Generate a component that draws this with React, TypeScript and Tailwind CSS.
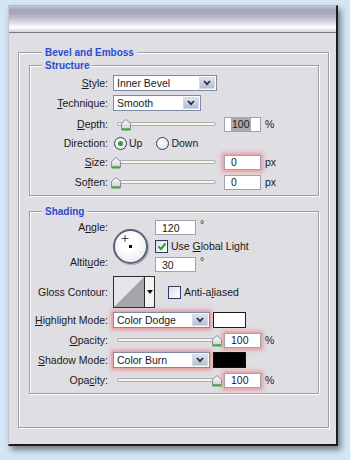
import type { ReactNode } from "react";

const TEXT = "text-[10.5px] leading-[14px] text-[#1a1a1a]";

function Legend({ children, ml }: { children: ReactNode; ml: string }) {
  return (
    <legend className={`${ml} px-[3px] bg-[#dfdee3] text-[10px] leading-[13px] font-bold text-[#2b4bd0]`}>
      {children}
    </legend>
  );
}

function Label({ children, className = "" }: { children: ReactNode; className?: string }) {
  return <div className={`w-[78px] shrink-0 text-right ${TEXT} ${className}`}>{children}</div>;
}

function Chevron() {
  return (
    <svg width="8" height="6" viewBox="0 0 8 6">
      <path d="M1 1 L4 4.2 L7 1" fill="none" stroke="#1f2b4d" strokeWidth="1.7" />
    </svg>
  );
}

function Select({ value, width, glow = false }: { value: string; width: string; glow?: boolean }) {
  return (
    <div
      className={`${width} ml-[5px] h-[16px] flex items-stretch bg-white border border-[#7d8aa6] ${
        glow ? "shadow-[0_0_4px_2px_rgba(240,96,96,0.55)]" : ""
      }`}
    >
      <div className={`flex-1 pl-[3px] ${TEXT}`}>{value}</div>
      <div className="w-[16px] m-px flex items-center justify-center border border-[#d4d9e3] bg-[linear-gradient(to_bottom,#dfe3ec,#b6bdcd)]">
        <Chevron />
      </div>
    </div>
  );
}

function Input({
  value,
  glow = false,
  selected = false,
  width = "w-[37px]",
  className = "",
}: {
  value: string;
  glow?: boolean;
  selected?: boolean;
  width?: string;
  className?: string;
}) {
  return (
    <div
      className={`${width} ${className} h-[15px] bg-white border border-[#a2a2ac] pl-[6px] flex items-center ${TEXT} ${
        glow ? "shadow-[0_0_4px_2px_rgba(240,96,96,0.55)]" : ""
      }`}
    >
      <span className={selected ? "bg-[#a9a9b6] px-px" : ""}>{value}</span>
    </div>
  );
}

function Thumb() {
  return (
    <svg width="10" height="12" viewBox="0 0 10 12">
      <defs>
        <linearGradient id="tg" x1="0" y1="0" x2="0" y2="1">
          <stop offset="0" stopColor="#ffffff" />
          <stop offset="1" stopColor="#cfd0d6" />
        </linearGradient>
      </defs>
      <path d="M0.5 4.5 L5 0.5 L9.5 4.5 V10 H0.5 Z" fill="url(#tg)" stroke="#8b8c98" />
      <rect x="0.5" y="9.5" width="9" height="2" fill="#35a93a" />
    </svg>
  );
}

function Slider({ pct }: { pct: number }) {
  return (
    <div className="relative ml-[5px] w-[106px] h-[16px] flex items-center">
      <div className="ml-[4px] w-[99px] h-[4px] rounded-full bg-[#f5f4ee] border border-[#aeada6]" />
      <div className="absolute top-[3px]" style={{ left: `${3 + pct * 101 - 5}px` }}>
        <Thumb />
      </div>
    </div>
  );
}

function Unit({ children }: { children: ReactNode }) {
  return <span className={`ml-[4px] ${TEXT}`}>{children}</span>;
}

function Radio({ checked }: { checked: boolean }) {
  return (
    <div className="w-[13px] h-[13px] rounded-full border border-[#2c3f62] bg-[radial-gradient(circle_at_40%_35%,#ffffff,#dcdce4)] flex items-center justify-center">
      {checked && <div className="w-[5px] h-[5px] rounded-full bg-[#2aa52f]" />}
    </div>
  );
}

function Checkbox({ checked }: { checked: boolean }) {
  return (
    <div className="w-[13px] h-[13px] border border-[#2c3f62] bg-[linear-gradient(135deg,#dcdce4,#ffffff)] flex items-center justify-center">
      {checked && (
        <svg width="10" height="9" viewBox="0 0 10 9">
          <path d="M1.5 4.5 L4 7 L8.5 1.5" fill="none" stroke="#21a126" strokeWidth="2" />
        </svg>
      )}
    </div>
  );
}

function Row({ children, className = "" }: { children: ReactNode; className?: string }) {
  return <div className={`flex items-center h-[16px] ${className}`}>{children}</div>;
}

export default function App() {
  return (
    <div className="w-[350px] h-[460px] overflow-hidden bg-[#d3e6f5] pl-[8px] pt-[5px] font-['Liberation_Sans',Arial,sans-serif]">
      <div className="w-[330px] h-[441px] flex flex-col bg-[#dfdee3] border-l border-t border-l-[#c4c4cc] border-t-[#b7b8c6] border-r-2 border-b-2 border-r-[#1c1c1c] border-b-[#1c1c1c] shadow-[3px_4px_6px_rgba(0,0,0,0.45)]">
        {/* title bar */}
        <div className="h-[27px] shrink-0 border-b border-[#787a8c] bg-[linear-gradient(to_bottom,#c4c5d2_0px,#a3a5b7_4px,#a8aabb_8px,#c2c3d1_13px,#e4e4ec_18px,#ffffff_21px,#f0f0f4_23px,#cfd0da_26px)]" />

        <div className="pl-[9px] pt-[13px]">
          <fieldset className="w-[311px] border border-[#9d9da7] shadow-[inset_1px_1px_0_#fff,1px_1px_0_#fff] pl-[10px] pb-[33px]">
            <Legend ml="ml-[13px]">Bevel and Emboss</Legend>

            {/* Structure */}
            <fieldset className="w-[290px] border border-[#9d9da7] shadow-[inset_1px_1px_0_#fff,1px_1px_0_#fff] pb-[5px]">
              <Legend ml="ml-[12px]">Structure</Legend>
              <Row className="mt-[3px]">
                <Label>
                  <u>S</u>tyle:
                </Label>
                <Select value="Inner Bevel" width="w-[104px]" />
              </Row>
              <Row className="mt-[4px]">
                <Label>
                  <u>T</u>echnique:
                </Label>
                <Select value="Smooth" width="w-[88px]" />
              </Row>
              <Row className="mt-[5px]">
                <Label>
                  <u>D</u>epth:
                </Label>
                <Slider pct={0.1} />
                <Input value="100" selected className="ml-[5px]" />
                <Unit>%</Unit>
              </Row>
              <Row className="mt-[3px]">
                <Label>Direction:</Label>
                <div className="ml-[6px] flex items-center">
                  <Radio checked />
                  <span className={`ml-[2px] ${TEXT}`}>Up</span>
                </div>
                <div className="ml-[14px] flex items-center">
                  <Radio checked={false} />
                  <span className={`ml-[2px] ${TEXT}`}>Down</span>
                </div>
              </Row>
              <Row className="mt-[3px]">
                <Label>
                  <u>S</u>ize:
                </Label>
                <Slider pct={0} />
                <Input value="0" glow className="ml-[5px]" />
                <Unit>px</Unit>
              </Row>
              <Row className="mt-[4px]">
                <Label>
                  So<u>f</u>ten:
                </Label>
                <Slider pct={0} />
                <Input value="0" className="ml-[5px]" />
                <Unit>px</Unit>
              </Row>
            </fieldset>

            {/* Shading */}
            <fieldset className="mt-[9px] w-[290px] border border-[#9d9da7] shadow-[inset_1px_1px_0_#fff,1px_1px_0_#fff] pb-[5px]">
              <Legend ml="ml-[12px]">Shading</Legend>

              <div className="mt-[2px] flex">
                <div className="w-[78px] h-[52px] pb-[3px] flex flex-col justify-between">
                  <Label>
                    A<u>n</u>gle:
                  </Label>
                  <Label>
                    Altit<u>u</u>de:
                  </Label>
                </div>
                <div className="ml-[5px] mt-[9px] w-[35px] h-[35px] rounded-full border-2 border-[#5b6080] bg-[radial-gradient(circle_at_45%_40%,#ffffff_30%,#e3e3e8)] shadow-[1px_1px_1px_rgba(0,0,0,0.25)]">
                  <svg width="31" height="31" viewBox="0 0 31 31">
                    <path d="M10 4 V11 M6.5 7.5 H13.5" stroke="#222" strokeWidth="0.8" />
                    <rect x="14" y="14" width="3" height="3" fill="#111" />
                  </svg>
                </div>
                <div className="ml-[7px] flex flex-col">
                  <div className="flex">
                    <Input value="120" width="w-[41px]" />
                    <span className={`ml-[4px] -mt-[3px] ${TEXT}`}>°</span>
                  </div>
                  <div className="mt-[4px] h-[14px] flex items-center">
                    <Checkbox checked />
                    <span className={`ml-[3px] ${TEXT}`}>
                      Use <u>G</u>lobal Light
                    </span>
                  </div>
                  <div className="mt-[4px] flex">
                    <Input value="30" width="w-[41px]" />
                    <span className={`ml-[4px] -mt-[3px] ${TEXT}`}>°</span>
                  </div>
                </div>
              </div>

              <div className="mt-[4px] h-[32px] flex items-center">
                <Label>Gloss Contour:</Label>
                <div className="ml-[5px] w-[42px] h-[32px] border border-[#2a2a2a] flex bg-white">
                  <svg width="30" height="30" viewBox="0 0 30 30">
                    <rect width="30" height="30" fill="#e6e6ea" />
                    <path d="M0 30 L30 0 V30 Z" fill="#a5a5aa" />
                  </svg>
                  <div className="flex-1 border-l border-[#2a2a2a] bg-[#f4f4f6] flex items-center justify-center">
                    <svg width="6" height="4" viewBox="0 0 6 4">
                      <path d="M0 0 H6 L3 4 Z" fill="#111" />
                    </svg>
                  </div>
                </div>
                <div className="ml-[13px] flex items-center">
                  <Checkbox checked={false} />
                  <span className={`ml-[3px] ${TEXT}`}>
                    Anti-a<u>l</u>iased
                  </span>
                </div>
              </div>

              <Row className="mt-[4px]">
                <Label>
                  <u>H</u>ighlight Mode:
                </Label>
                <Select value="Color Dodge" width="w-[97px]" glow />
                <div className="ml-[3px] w-[33px] h-[16px] bg-white border border-[#1a1a1a]" />
              </Row>
              <Row className="mt-[4px]">
                <Label>
                  <u>O</u>pacity:
                </Label>
                <Slider pct={1} />
                <Input value="100" glow className="ml-[5px]" />
                <Unit>%</Unit>
              </Row>
              <Row className="mt-[4px]">
                <Label>
                  <u>S</u>hadow Mode:
                </Label>
                <Select value="Color Burn" width="w-[97px]" glow />
                <div className="ml-[3px] w-[33px] h-[16px] bg-black border border-dotted border-[#4a0a0a]" />
              </Row>
              <Row className="mt-[4px]">
                <Label>
                  Opa<u>c</u>ity:
                </Label>
                <Slider pct={1} />
                <Input value="100" glow className="ml-[5px]" />
                <Unit>%</Unit>
              </Row>
            </fieldset>
          </fieldset>
        </div>
      </div>
    </div>
  );
}
